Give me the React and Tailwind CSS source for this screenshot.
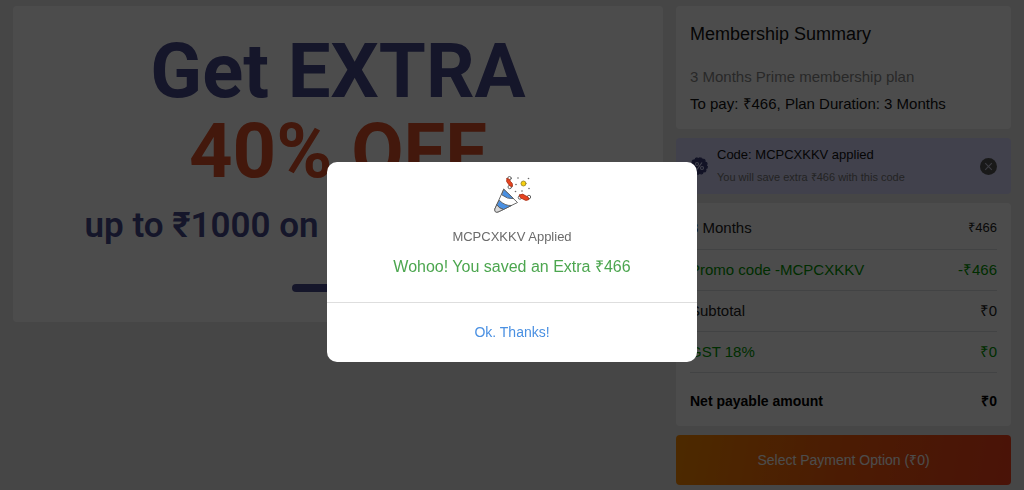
import React from "react";

const rows = [
  { label: "3 Months", value: "₹466", tone: "text-[#222]", size: "text-[13px]" },
  { label: "Promo code -MCPCXKKV", value: "-₹466", tone: "text-[#009900]", size: "text-[15px]" },
  { label: "Subtotal", value: "₹0", tone: "text-[#222]", size: "text-[15px]" },
  { label: "GST 18%", value: "₹0", tone: "text-[#009900]", size: "text-[15px]" },
];

function PartyPopper() {
  return (
    <svg viewBox="0 0 74 74" className="h-[37px] w-[37px]" aria-hidden="true">
      <g stroke="#5a5a5a" strokeWidth="1.800" strokeLinejoin="round" strokeLinecap="round">
        <path d="M20 27 L47 53 L8 72 Q1 74 1.500 67 Z" fill="#fff" />
        <path d="M20 27 L39 45 Q27 47 16 38 Z" fill="#4a90e2" />
        <path d="M11 49 Q22 60 35 59 L19 67 Q10 65 6 58 Z" fill="#4a90e2" />
        <path d="M6 58 Q10 65 19 67 L8 72 Q1 74 1.500 67 Z" fill="#d8d8d8" />
        <circle cx="31" cy="4.500" r="3.500" fill="#fff" />
        <circle cx="31.500" cy="22" r="3.500" fill="#fff" />
        <path d="M26 5 Q32 5 33 11 Q38 14 37 21 Q30 21 29 16 Q23 12 26 5 Z" fill="#e8431f" stroke="#a8381f" />
        <circle cx="52" cy="43" r="3.500" fill="#fff" />
        <circle cx="70" cy="42" r="3.500" fill="#fff" />
        <path d="M51 38 Q58 34 62 39 Q70 41 70 47 Q63 51 58 46 Q50 44 51 38 Z" fill="#e8431f" stroke="#a8381f" />
        <circle cx="59" cy="15" r="5" fill="#f8d00e" stroke="#9a8a30" />
      </g>
      <g fill="#6a6a6a">
        <circle cx="48" cy="4" r="1.600" />
        <circle cx="69" cy="5" r="1.600" />
        <circle cx="44" cy="17" r="1.600" />
        <circle cx="70" cy="25" r="1.600" />
        <circle cx="56" cy="30" r="1.600" />
        <circle cx="43" cy="31" r="1.600" />
      </g>
    </svg>
  );
}

function PercentBadge() {
  return (
    <svg viewBox="0 0 36 36" className="h-[18px] w-[18px] shrink-0" aria-hidden="true">
      <circle cx="18" cy="18" r="16.500" fill="#3c3f7d" />
      <circle cx="18" cy="18" r="16.500" fill="none" stroke="#3c3f7d" strokeWidth="2.500" strokeDasharray="5.200 3.440" />
      <g fill="none" stroke="#dadaff" strokeWidth="2.200">
        <circle cx="14" cy="14" r="3" />
        <circle cx="24" cy="22" r="3" />
        <path d="M24 11 L14 25" />
      </g>
    </svg>
  );
}

function Banner() {
  return (
    <section className="flex flex-col items-center self-start rounded bg-white pt-[25px] pb-[30px] text-center font-[Roboto,sans-serif] text-[#494c8c]">
      <h1 className="text-[76px] leading-[80px] font-bold">
        Get EXTRA
        <br />
        <span className="text-[#e0532b]">40% OFF</span>
      </h1>
      <p className="mt-[9px] text-[35px] leading-[52px] font-semibold whitespace-nowrap">up to ₹1000 on this membership</p>
      <div className="mt-[32px] h-[8px] w-[92px] rounded-full bg-[#494c8c]" />
    </section>
  );
}

function Summary() {
  return (
    <aside className="flex flex-col gap-[9px]">
      <section className="rounded bg-white px-[14px] pt-[14px] pb-[12px]">
        <h2 className="text-[18px] leading-[28px] text-[#111]">Membership Summary</h2>
        <p className="mt-[15px] text-[15px] leading-[27px] text-[#888]">3 Months Prime membership plan</p>
        <p className="text-[15px] leading-[27px] text-[#111]">To pay: ₹466, Plan Duration: 3 Months</p>
      </section>

      <section className="flex items-center rounded bg-[#dadaff] px-[14px] py-[6px]">
        <PercentBadge />
        <div className="ml-[9px] flex-1">
          <p className="text-[13px] leading-[22px] text-[#111]">Code: MCPCXKKV applied</p>
          <p className="text-[11px] leading-[22px] text-[#777]">You will save extra ₹466 with this code</p>
        </div>
        <button type="button" aria-label="Remove code" className="flex h-[17px] w-[17px] items-center justify-center rounded-full bg-[#555]">
          <svg viewBox="0 0 10 10" className="h-[11px] w-[11px]" fill="none" stroke="#c8c8dc" strokeWidth="1">
            <path d="M2 2 L8 8 M8 2 L2 8" />
          </svg>
        </button>
      </section>

      <section className="rounded bg-white px-[14px] pt-[5px]">
        <table className="w-full border-collapse text-[15px] leading-[20px]">
          <tbody>
            {rows.map((r) => (
              <tr key={r.label} className={`h-[41px] border-b border-[#dedfe4] ${r.tone}`}>
                <th scope="row" className="text-left font-normal">{r.label}</th>
                <td className={`text-right ${r.size}`}>{r.value}</td>
              </tr>
            ))}
            <tr className="h-[54px] text-[14px] font-bold text-black">
              <th scope="row" className="pt-[3px] text-left">Net payable amount</th>
              <td className="pt-[3px] text-right">₹0</td>
            </tr>
          </tbody>
        </table>
      </section>

      <button type="button" className="h-[50px] rounded bg-linear-[100deg] from-[#ff8c00] via-[#fb5c0c] to-[#f7401b] text-[14px] text-white">
        Select Payment Option (₹0)
      </button>
    </aside>
  );
}

function SavedDialog() {
  return (
    <div className="fixed inset-0 flex items-start justify-center bg-black/70 pt-[162px]">
      <div role="dialog" aria-modal="true" aria-labelledby="saved-title" className="w-[370px] overflow-hidden rounded-[10px] bg-white text-center">
        <div className="flex flex-col items-center border-b border-[#dedede] pt-[14px] pb-[22px]">
          <PartyPopper />
          <p className="mt-[12px] text-[13px] leading-[24px] text-[#6b6b6b]">MCPCXKKV Applied</p>
          <h2 id="saved-title" className="mt-[5px] text-[16px] leading-[26px] text-[#4ca64f]">Wohoo! You saved an Extra ₹466</h2>
        </div>
        <button type="button" className="h-[59px] w-full text-[14px] text-[#4a90e2]">Ok. Thanks!</button>
      </div>
    </div>
  );
}

export default function App() {
  return (
    <div className="min-h-screen bg-[#ebebeb] px-[13px] pt-[6px] pb-[5px] font-['Liberation_Sans',Arial,sans-serif]">
      <main className="grid grid-cols-[650fr_335fr] gap-[13px]">
        <Banner />
        <Summary />
      </main>
      <SavedDialog />
    </div>
  );
}
